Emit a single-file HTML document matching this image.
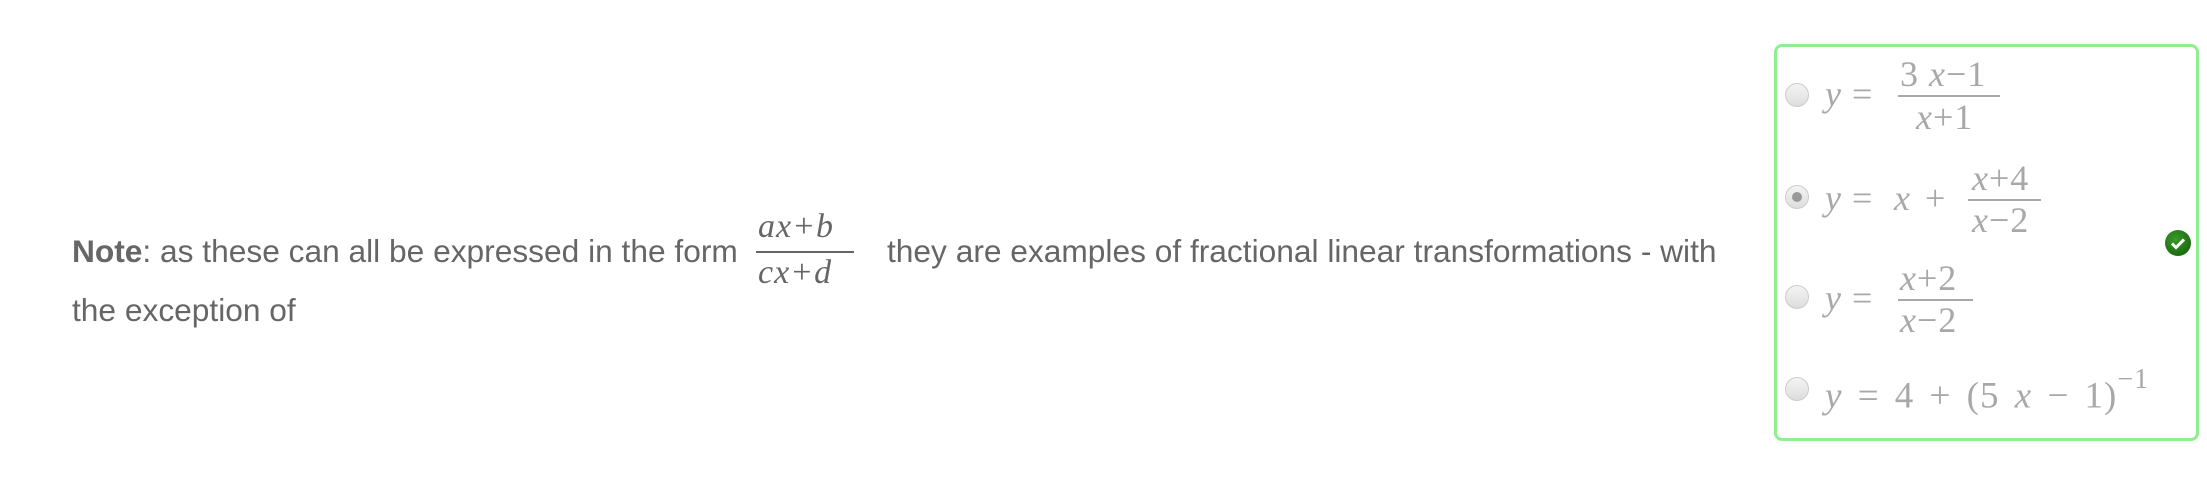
<!DOCTYPE html>
<html><head><meta charset="utf-8"><style>
body{margin:0;width:2207px;height:499px;background:#fff;position:relative;overflow:hidden;font-family:"Liberation Sans",Arial,sans-serif;color:#666}
.t{position:absolute;font-size:31.7px;white-space:nowrap}
.m{position:absolute;font-family:"Liberation Serif",serif;color:#a8a8a8;font-size:36px;white-space:nowrap;line-height:1}
.i{font-style:italic}
.bar{position:absolute;height:2px;background:#a8a8a8}
.r{position:absolute;width:24px;height:24px;border-radius:50%;border:1px solid #ccc;background:linear-gradient(#f4f4f4,#ddd);box-sizing:border-box}
</style></head><body>
<div class="t" style="left:72px;top:233px"><b>Note</b>: as these can all be expressed in the form</div>
<div class="m i" style="left:758px;top:210px;color:#666;font-size:34px;letter-spacing:1px">ax+b</div>
<div class="bar" style="left:756px;top:251px;width:98px;background:#666"></div>
<div class="m i" style="left:758px;top:256px;color:#666;font-size:34px;letter-spacing:1px">cx+d</div>
<div class="t" style="left:887px;top:233px">they are examples of fractional linear transformations - with</div>
<div class="t" style="left:72px;top:292px">the exception of</div>

<div style="position:absolute;left:1774px;top:44px;width:425px;height:397px;border:3px solid #90ee90;border-radius:8px;box-sizing:border-box"></div>

<div class="r" style="left:1785px;top:83px"></div>
<div class="m i" style="left:1825px;top:76px">y</div><div class="m" style="left:1852px;top:76px">=</div>
<div class="m" style="left:1900px;top:56px;letter-spacing:1px">3 <span class="i">x</span>−1</div>
<div class="bar" style="left:1898px;top:95px;width:102px"></div>
<div class="m" style="left:1916px;top:99px;letter-spacing:1px"><span class="i">x</span>+1</div>

<div class="r" style="left:1785px;top:185px"><div style="position:absolute;left:6px;top:6px;width:10px;height:10px;border-radius:50%;background:#999"></div></div>
<div class="m i" style="left:1825px;top:180px">y</div><div class="m" style="left:1852px;top:180px">=</div>
<div class="m i" style="left:1894px;top:180px">x</div><div class="m" style="left:1925px;top:180px">+</div>
<div class="m" style="left:1972px;top:160px;letter-spacing:1px"><span class="i">x</span>+4</div>
<div class="bar" style="left:1968px;top:199px;width:73px"></div>
<div class="m" style="left:1972px;top:202px;letter-spacing:1px"><span class="i">x</span>−2</div>

<div class="r" style="left:1785px;top:285px"></div>
<div class="m i" style="left:1825px;top:280px">y</div><div class="m" style="left:1852px;top:280px">=</div>
<div class="m" style="left:1900px;top:260px;letter-spacing:1px"><span class="i">x</span>+2</div>
<div class="bar" style="left:1898px;top:299px;width:75px"></div>
<div class="m" style="left:1900px;top:302px;letter-spacing:1px"><span class="i">x</span>−2</div>

<div class="r" style="left:1785px;top:377px"></div>
<div class="m" style="left:1825px;top:372px;font-size:37px;word-spacing:5px;letter-spacing:1px"><span class="i">y</span> = 4 + (5 <span class="i">x</span> − 1)<sup style="font-size:28px;position:relative;top:-6px">−1</sup></div>

<div style="position:absolute;left:2165px;top:230px;width:26px;height:26px;border-radius:50%;background:radial-gradient(circle at 40% 35%,#3a9a2a,#105a08)"></div>
<svg style="position:absolute;left:2165px;top:230px" width="26" height="26"><path d="M7 13.5l4 4 8-8" stroke="#fff" stroke-width="3" fill="none"/></svg>
</body></html>
